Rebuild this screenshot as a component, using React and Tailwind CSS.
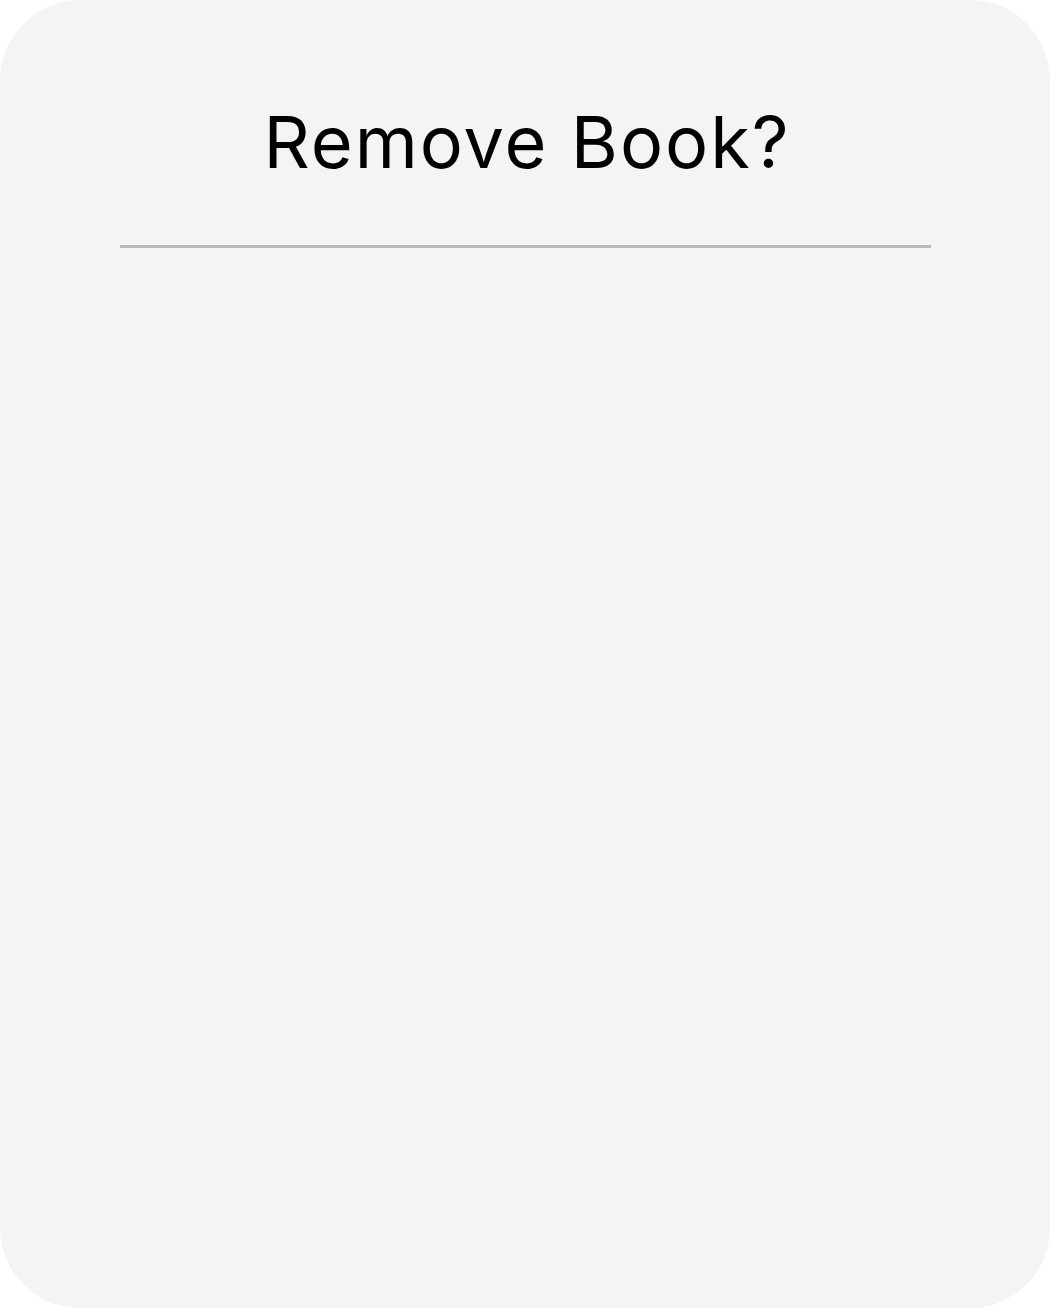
export default function App() {
  return (
    <div className="w-[1052px] h-[1308px] bg-white">
      <div className="w-[1050px] h-[1308px] bg-[#f4f4f4] rounded-[80px] flex flex-col items-center">
        <h1
          className="mt-[96px] pl-[4px] text-[72px] leading-[92px] tracking-[2px] text-black font-normal"
          style={{ fontFamily: 'Inter, "Open Sans", sans-serif' }}
        >
          Remove Book?
        </h1>
        <div className="mt-[57px] w-[811px] h-[3px] bg-[#bbbbbb]" />
      </div>
    </div>
  );
}
